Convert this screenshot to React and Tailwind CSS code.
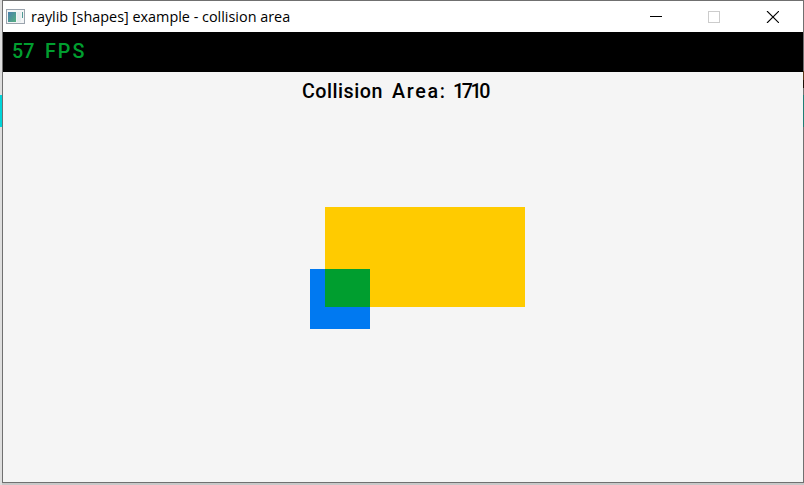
import React from "react";

function AppIcon() {
  return (
    <svg width="19" height="15" viewBox="0 0 19 15" shapeRendering="crispEdges" className="block">
      <defs>
        <linearGradient id="pane" x1="0" y1="0" x2="1" y2="1">
          <stop offset="0" stopColor="#4a7fae" />
          <stop offset="1" stopColor="#55b080" />
        </linearGradient>
      </defs>
      <rect width="19" height="15" fill="#9aa3ad" />
      <rect x="1" y="1" width="17" height="13" fill="#f3f5f6" />
      <rect x="2" y="3" width="8" height="10" fill="url(#pane)" />
      <rect x="11" y="3" width="4" height="10" fill="#e8edef" />
      <rect x="16" y="3" width="1" height="6" fill="#4f9a94" />
    </svg>
  );
}

function TitleBar() {
  return (
    <div className="flex h-[31px] items-center bg-white pl-[3px]">
      <AppIcon />
      <span className="ml-[6px] flex-1 whitespace-nowrap font-['Open_Sans',sans-serif] text-[14.4px] leading-[30px] text-black">
        raylib [shapes] example - collision area
      </span>
      <svg width="129" height="12" viewBox="0 0 129 12" className="mr-[24px] block" shapeRendering="crispEdges" fill="none">
        <path d="M0 5.5h12" stroke="#000" />
        <rect x="58.5" y="0.5" width="11" height="11" stroke="#ccc" />
        <path d="M117 0l12 12M129 0l-12 12" stroke="#000" strokeWidth="1.1" shapeRendering="auto" />
      </svg>
    </div>
  );
}

export default function App() {
  return (
    <div className="flex h-[485px] w-[804px] overflow-hidden bg-[#c8c8c8]">
      <div className="w-[2px] bg-[#dedede] pt-[95px]">
        <div className="h-8 bg-[#00d5da]" />
      </div>
      <div className="h-[483px] w-[801px] border-y border-l border-[#707070] bg-[#f5f5f5]">
        <TitleBar />
        <div className="flex h-10 bg-black pl-[9px] pt-[8px] font-['Roboto',sans-serif] text-[19.7px] font-medium leading-6 text-[#009e2f]">
          <span className="w-[33px]">57</span>
          <span className="tracking-[2px]">FPS</span>
        </div>
        <div className="flex pl-[299px] pt-[8px] font-['Roboto',sans-serif] text-[19.7px] font-medium leading-6 text-black">
          <span className="w-[90px] tracking-[0.5px]">Collision</span>
          <span className="w-[61px] tracking-[1.7px]">Area:</span>
          <span className="tracking-[-2.4px]">1710</span>
        </div>
        <div className="ml-[307px] mt-[103px] grid grid-cols-[15px_45px_155px] grid-rows-[62px_38px_22px]">
          <div />
          <div className="col-span-2 bg-[#ffcb00]" />
          <div className="bg-[#0079f1]" />
          <div className="bg-[#009e2f]" />
          <div className="bg-[#ffcb00]" />
          <div className="col-span-2 bg-[#0079f1]" />
        </div>
      </div>
      <div className="flex h-[483px] w-px flex-col bg-[#707070] pt-[71px]">
        <div className="h-[9px] bg-[#5a3a1c]" />
        <div className="h-2 bg-[#1c1008]" />
        <div className="mt-[7px] h-8 bg-[#1f7d74]" />
      </div>
    </div>
  );
}
